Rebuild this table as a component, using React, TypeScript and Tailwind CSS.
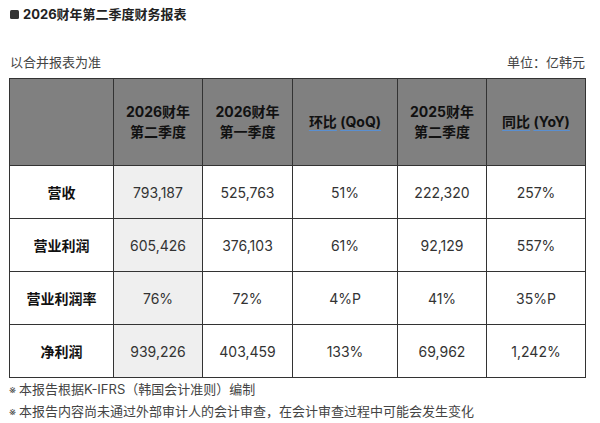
import React from "react"

const font = { fontFamily: '"Inter", "Noto Sans CJK SC", sans-serif' }

interface Row {
  label: string
  values: string[]
}

const rows: Row[] = [
  { label: "营收", values: ["793,187", "525,763", "51%", "222,320", "257%"] },
  { label: "营业利润", values: ["605,426", "376,103", "61%", "92,129", "557%"] },
  { label: "营业利润率", values: ["76%", "72%", "4%P", "41%", "35%P"] },
  { label: "净利润", values: ["939,226", "403,459", "133%", "69,962", "1,242%"] },
]

function Link({ children }: { children: React.ReactNode }) {
  return (
    <span className="underline decoration-[#5a8fd0] decoration-1 underline-offset-[3px]">
      {children}
    </span>
  )
}

export default function App() {
  return (
    <div className="w-[600px] h-[423px] bg-white text-[#222] overflow-hidden" style={font}>
      <div className="flex items-center gap-[4px] pl-[10px] pt-[5px] h-[24px]">
        <span className="w-[9px] h-[9px] rounded-[1.5px] bg-[#333]" />
        <h1 className="text-[13px] font-bold leading-none text-[#222]">
          2026财年第二季度财务报表
        </h1>
      </div>

      <div className="flex justify-between items-end pr-[15px] pl-[10px] mt-[32px] text-[13px] text-[#444] leading-none">
        <span>以合并报表为准</span>
        <span>单位：亿韩元</span>
      </div>

      <table className="ml-[9px] mt-[9px] border-collapse table-fixed w-[576px] text-center">
        <colgroup>
          <col className="w-[104px]" />
          <col className="w-[89px]" />
          <col className="w-[90px]" />
          <col className="w-[105px]" />
          <col className="w-[89px]" />
          <col className="w-[99px]" />
        </colgroup>
        <thead>
          <tr className="h-[87px] bg-[#808080] text-[14px] font-bold text-[#111] leading-[20px]">
            <th className="border border-[#333]" />
            <th className="border border-[#333]">
              2026财年
              <br />
              第二季度
            </th>
            <th className="border border-[#333]">
              2026财年
              <br />
              第一季度
            </th>
            <th className="border border-[#333]">
              <Link>环比</Link> <Link>(QoQ)</Link>
            </th>
            <th className="border border-[#333]">
              2025财年
              <br />
              第二季度
            </th>
            <th className="border border-[#333]">
              <Link>同比</Link> <Link>(YoY)</Link>
            </th>
          </tr>
        </thead>
        <tbody>
          {rows.map((r) => (
            <tr key={r.label} className="h-[53px] text-[14px]">
              <td className="border border-[#333] font-bold text-[#111]">{r.label}</td>
              {r.values.map((v, i) => (
                <td
                  key={i}
                  className={
                    i === 0
                      ? "border border-[#333] bg-[#efefef] text-[#333]"
                      : "border border-[#333] text-[#333]"
                  }
                >
                  {v}
                </td>
              ))}
            </tr>
          ))}
        </tbody>
      </table>

      <div className="pl-[9px] mt-[1px] text-[13px] text-[#444] leading-[21px]">
        <p>
          <span className="text-[11px] text-[#555] mr-[3px]">※</span>本报告根据K-IFRS（韩国会计准则）编制
        </p>
        <p>
          <span className="text-[11px] text-[#555] mr-[3px]">※</span>本报告内容尚未通过外部审计人的会计审查，在会计审查过程中可能会发生变化
        </p>
      </div>
    </div>
  )
}
